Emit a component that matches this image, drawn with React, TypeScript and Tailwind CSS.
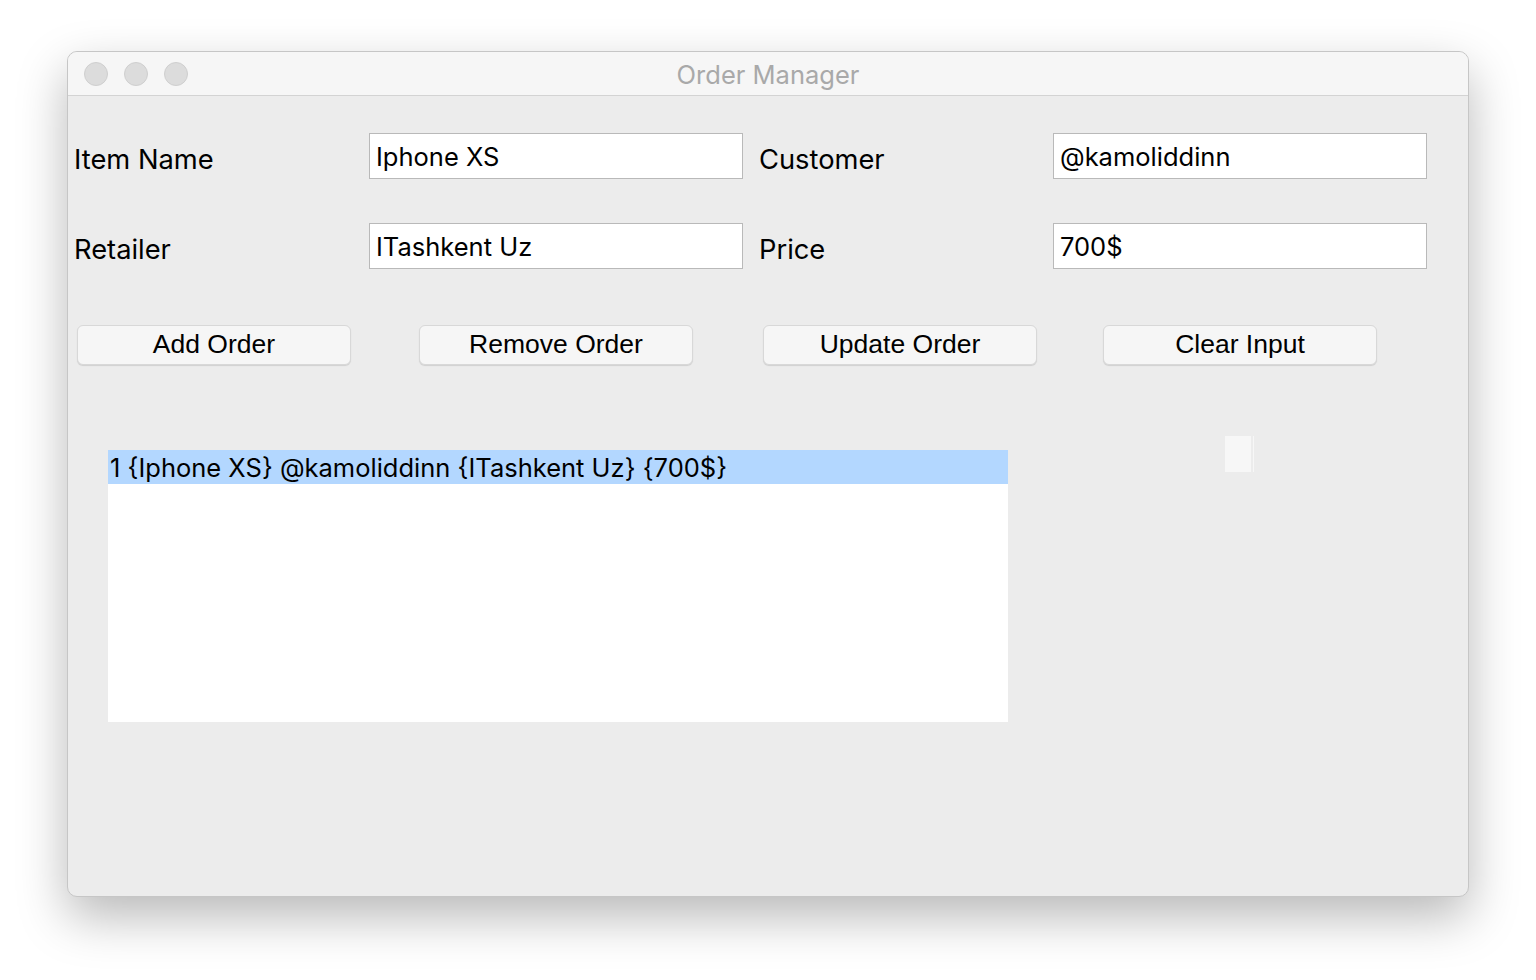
import React from 'react';

const fieldText = "font-['Inter','Noto_Sans',sans-serif] text-[25.5px] text-black";

const Field: React.FC<{ value: string }> = ({ value }) => (
  <div className={`h-[46px] w-[374px] bg-white border border-[#b9b9b9] flex items-center pl-[6px] pt-[2px] ${fieldText}`}>
    {value}
  </div>
);

const Label: React.FC<{ text: string; w: string }> = ({ text, w }) => (
  <div className={`${w} h-[46px] flex items-center pt-[8px] font-['Inter','Noto_Sans',sans-serif] text-[27.3px] text-black`}>{text}</div>
);

const Button: React.FC<{ text: string }> = ({ text }) => (
  <div className="w-[274px] h-[40px] rounded-[6px] bg-[#f6f6f6] border border-[#d8d8d8] shadow-[0_1px_1px_rgba(0,0,0,0.12)] flex items-center justify-center font-['Liberation_Sans',sans-serif] text-[26.5px] text-black">
    {text}
  </div>
);

export default function App() {
  return (
    <div className="w-[1536px] h-[980px] bg-white pt-[51px] pl-[67px] overflow-hidden">
      <div className="w-[1402px] h-[846px] rounded-[10px] bg-[#ececec] border border-[#c6c6c6] shadow-[0_20px_50px_rgba(0,0,0,0.28)] overflow-hidden flex flex-col">
        {/* Title bar */}
        <div className="relative h-[44px] bg-[#f6f6f6] border-b border-[#d3d3d3] flex items-center justify-center shrink-0">
          <div className="absolute left-[16px] top-[10px] flex gap-[16px]">
            <span className="w-[24px] h-[24px] rounded-full bg-[#dcdcdc] border border-[#cfcfcf]" />
            <span className="w-[24px] h-[24px] rounded-full bg-[#dcdcdc] border border-[#cfcfcf]" />
            <span className="w-[24px] h-[24px] rounded-full bg-[#dcdcdc] border border-[#cfcfcf]" />
          </div>
          <span className="font-['Inter','Noto_Sans',sans-serif] text-[25.5px] text-[#a9a9a9] pt-[4px]">Order Manager</span>
        </div>

        {/* Form */}
        <div className="pt-[37px] pl-[6px] flex flex-col gap-[44px]">
          <div className="flex items-center">
            <Label text="Item Name" w="w-[295px]" />
            <Field value="Iphone XS" />
            <div className="w-[16px]" />
            <Label text="Customer" w="w-[294px]" />
            <Field value="@kamoliddinn" />
          </div>
          <div className="flex items-center">
            <Label text="Retailer" w="w-[295px]" />
            <Field value="ITashkent Uz" />
            <div className="w-[16px]" />
            <Label text="Price" w="w-[294px]" />
            <Field value="700$" />
          </div>
        </div>

        {/* Buttons */}
        <div className="mt-[56px] pl-[9px] flex">
          <Button text="Add Order" />
          <div className="w-[68px]" />
          <Button text="Remove Order" />
          <div className="w-[70px]" />
          <Button text="Update Order" />
          <div className="w-[66px]" />
          <Button text="Clear Input" />
        </div>

        {/* List + small widget */}
        <div className="mt-[71px] flex items-start">
          <div className="ml-[40px] mt-[14px] w-[900px] h-[272px] bg-white">
            <div className={`h-[34px] bg-[#b3d7ff] flex items-center pl-[2px] pt-[2px] ${fieldText}`}>
              1 {'{'}Iphone XS{'}'} @kamoliddinn {'{'}ITashkent Uz{'}'} {'{'}700${'}'}
            </div>
          </div>
          <div className="ml-[217px] flex">
            <div className="w-[26px] h-[36px] bg-[#f7f7f7]" />
            <div className="ml-[2px] w-[1px] h-[36px] bg-[#f7f7f7]" />
          </div>
        </div>
      </div>
    </div>
  );
}
